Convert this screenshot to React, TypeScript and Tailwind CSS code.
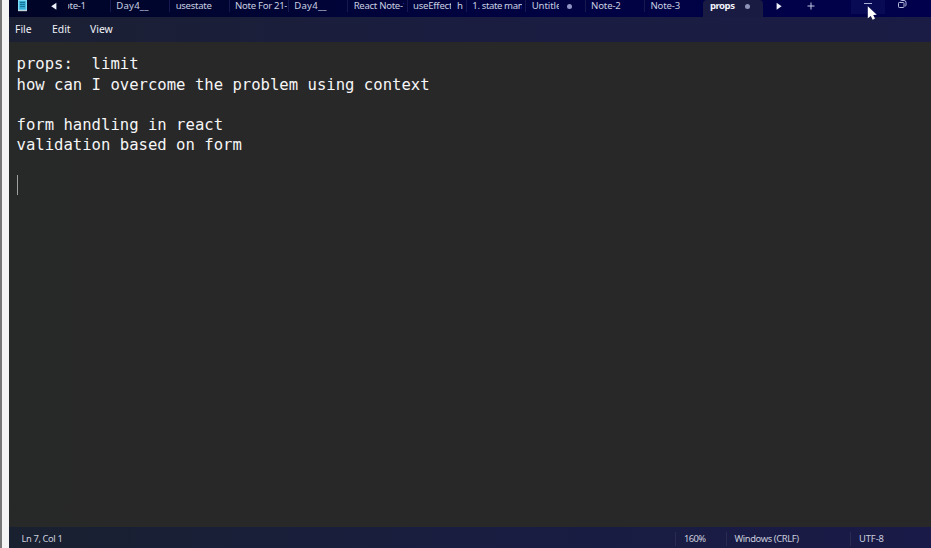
import React from 'react';

type Tab = { label: string; tail?: string; dot?: boolean; style?: string };

const tabs: Tab[] = [
  { label: 'Day4__', style: 'tracking-[0.2px]' },
  { label: 'usestate', style: 'tracking-[-0.3px]' },
  { label: 'Note For 21-', style: 'tracking-[-0.3px]' },
  { label: 'Day4__', style: 'tracking-[0.2px]' },
  { label: 'React Note-1', style: 'w-[50px] tracking-[-0.3px]' },
  { label: 'useEffect', tail: 'h', style: 'w-[38px] tracking-[-0.25px]' },
  { label: '1. state mana', style: 'w-[50px] tracking-[-0.4px]' },
  { label: 'Untitled', style: 'w-[27px] tracking-[-0.1px]', dot: true },
  { label: 'Note-2', style: 'tracking-[-0.15px]' },
  { label: 'Note-3', style: 'tracking-[-0.15px]' },
];

function TabItem({ tab }: { tab: Tab }) {
  return (
    <div className="flex h-[12px] w-[59.35px] shrink-0 items-center border-l border-[#15194f] pl-[5.3px]">
      <span className={`shrink-0 overflow-hidden whitespace-pre ${tab.style ?? ''}`}>{tab.label}</span>
      {tab.tail && <span className="ml-[6px]">{tab.tail}</span>}
      {tab.dot && <span className="ml-[8.5px] size-[5px] rounded-full bg-[#8e94c4]" />}
    </div>
  );
}

function TitleBar() {
  return (
    <header className="flex h-[17px] items-start bg-linear-to-r from-[#000526] via-[#00033f] via-50% to-[#00004c] text-[9.6px] leading-[12px] text-[#c9cfe0]">
      <svg className="ml-[8px] h-[12px] w-[11px] shrink-0" viewBox="0 0 11 12">
        <path fill="#7fdcf5" d="M1 0h9v11H1z" />
        <path fill="#35a9d4" d="M2.3 1h6.4v8.5H2.3z" />
        <path fill="#c5d4d8" d="M1 10h9v1.2H1z" />
        <path stroke="#15769a" d="M3 2.5h5M3 4.5h5M3 6.5h5" />
      </svg>
      <svg className="ml-[23px] h-[13px] w-[6px] shrink-0" viewBox="0 0 6 13">
        <path fill="#eef0fa" d="M5.4 2.8v7L.2 6.3z" />
      </svg>
      <div className="ml-[11px] flex w-[42px] shrink-0 justify-start overflow-hidden">
        <span className="-ml-[4px] tracking-[-0.3px]">ote-1</span>
      </div>
      {tabs.map((tab, i) => (
        <TabItem key={i} tab={tab} />
      ))}
      <div className="flex h-[17px] w-[60px] shrink-0 items-start rounded-t-sm bg-[#191b43] pl-[6.5px] font-bold text-[#f2f3fa]">
        <span className="w-[25px] tracking-[-0.5px]">props</span>
        <span className="mt-[3.5px] ml-[10px] size-[5px] rounded-full bg-[#8e94b8]" />
      </div>
      <svg className="ml-[12.5px] h-[13px] w-[6px] shrink-0" viewBox="0 0 6 13">
        <path fill="#eef0fa" d="M.6 2.8v7l5-3.5z" />
      </svg>
      <svg className="ml-[25px] h-[13px] w-[8px] shrink-0" viewBox="0 0 8 13">
        <path stroke="#c3c8e4" d="M4 2.5v7M.5 6h7" />
      </svg>
      <div className="relative ml-[36.5px] h-[14px] w-[34px] shrink-0 bg-[#080b54]">
        <svg className="absolute top-0 left-[13px] h-[20px] w-[14px]" viewBox="0 0 14 20">
          <path stroke="#a9afd5" d="M0 3.5h8" />
          <path fill="#fff" d="M3.8 6.3v12l3-2.4 1.9 3.8 2.3-1.1-1.8-3.6 3.6-.3z" />
        </svg>
      </div>
      <svg className="ml-[13px] h-[10px] w-[9px] shrink-0" viewBox="0 0 9 10" fill="none" stroke="#b7bddf">
        <rect x=".5" y="2.5" width="5.5" height="5" rx=".8" />
        <path d="M2.5 1.2Q2.7.5 3.5.5H6Q8 .5 8 2.5v2.6Q8 6 7.2 6.2" />
      </svg>
    </header>
  );
}

export default function App() {
  return (
    <div className="flex h-[548px] w-[931px] overflow-hidden bg-[#282828] font-['Noto_Sans','Open_Sans',sans-serif]">
      <div className="w-[2px] shrink-0 bg-[#777]" />
      <div className="w-[7px] shrink-0 bg-[#f4f4f5]" />
      <main className="flex w-[922px] flex-col">
        <TitleBar />
        <nav className="flex h-[25px] shrink-0 items-center bg-linear-to-r from-[#1b2033] via-[#1a1d40] via-50% to-[#1b1c45] pt-[1.5px] pl-[6px] text-[10.4px] text-[#f1f2f7]">
          <span className="w-[37px]">File</span>
          <span className="w-[38px]">Edit</span>
          <span>View</span>
        </nav>
        <section className="flex-1 bg-linear-to-r from-[#272828] via-[#292829] via-30% to-[#292829] pt-[12.3px] pl-[7.5px] font-['DejaVu_Sans_Mono',monospace] text-[15.6px] leading-[20.2px] whitespace-pre text-[#f6f6f6]">
          <div>props:  limit</div>
          <div>how can I overcome the problem using context</div>
          <div>&nbsp;</div>
          <div>form handling in react</div>
          <div>validation based on form</div>
          <div>&nbsp;</div>
          <div className="-mt-[0.3px] h-[20px] w-px bg-[#a0a0a0]" />
        </section>
        <footer className="flex h-[21px] shrink-0 items-center bg-linear-to-r from-[#19202f] via-[#191d40] via-50% to-[#191a47] pt-[3px] text-[9.4px] text-[#c9cddb]">
          <span className="w-[666px] pl-[12.5px] tracking-[-0.4px]">Ln 7, Col 1</span>
          <span className="w-[50.5px] border-l border-[#292b50] pl-[8px] tracking-[-0.6px]">160%</span>
          <span className="w-[124.5px] border-l border-[#292b50] pl-[8px] tracking-[-0.4px]">Windows (CRLF)</span>
          <span className="border-l border-[#292b50] pl-[8px] tracking-[-0.1px]">UTF-8</span>
        </footer>
      </main>
    </div>
  );
}
